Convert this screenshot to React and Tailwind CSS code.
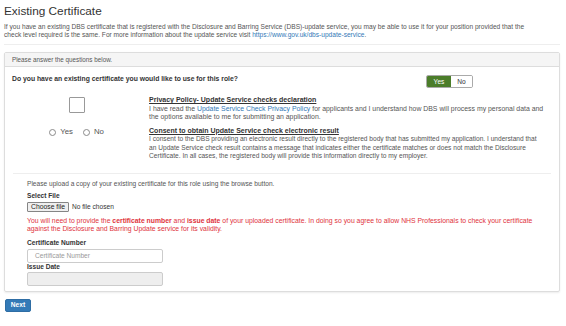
import React from "react";

const Radio = ({ label }) => (
  <label className="flex items-center gap-[4px] h-[9px]">
    <span className="w-[7px] h-[7px] rounded-full border border-[#8a8a8a] bg-white"></span>
    <span className="text-[7.8px]">{label}</span>
  </label>
);

const App = () => {
  const heading = "text-[#333] font-bold";

  return (
    <div className="w-[566px] h-[326px] overflow-hidden bg-white font-['Liberation_Sans',Arial,sans-serif] text-[6.6px] leading-[8px] text-[#555]">
      <div className="px-[4px]">
        {/* Title */}
        <h1 className="mt-[4px] text-[11.8px] leading-[15px] text-[#333] font-normal">Existing Certificate</h1>
        <p className="mt-[4px] w-[556px] whitespace-nowrap">
          If you have an existing DBS certificate that is registered with the Disclosure and Barring Service (DBS)-update service, you may be able to use it for your position provided that the
          <br />
          check level required is the same. For more information about the update service visit{" "}
          <span className="text-[#337ab7]">https://www.gov.uk/dbs-update-service</span>.
        </p>
        <div className="mt-[5px] h-px bg-[#eee] w-[556px]"></div>

        {/* Panel */}
        <div className="mt-[7px] w-[556px] border border-[#ddd] rounded-[2px] shadow-[0_1px_2px_rgba(0,0,0,0.08)]">
          <div className="h-[14px] bg-[#f5f5f5] border-b border-[#ddd] px-[7px] flex items-center text-[6.3px] text-[#555]">
            Please answer the questions below.
          </div>

          <div className="px-[8px] pt-[8px] pb-[5px]">
            {/* Question */}
            <div className="flex items-start">
              <p className={`w-[414px] ${heading} text-[6.8px] -ml-[1px]`}>Do you have an existing certificate you would like to use for this role?</p>
              <div className="flex h-[13px] rounded-[2px] overflow-hidden border border-[#aaa]">
                <span className="w-[24px] bg-[#4b7d2a] text-white flex items-center justify-center">Yes</span>
                <span className="w-[21px] bg-white text-[#333] flex items-center justify-center">No</span>
              </div>
            </div>

            {/* Privacy declaration */}
            <div className="flex mt-[8px] leading-[8.5px]">
              <div className="w-[128px] flex justify-center items-start">
                <span className="mt-[1px] w-[16px] h-[16px] border border-[#999] rounded-[1px] bg-white"></span>
              </div>
              <div className="ml-[9px] w-[405px] whitespace-nowrap">
                <p className={`${heading} text-[7px] underline`}>Privacy Policy- Update Service checks declaration</p>
                <p className="text-[6.9px]">
                  I have read the <span className="text-[#337ab7]">Update Service Check Privacy Policy</span> for applicants and I understand how DBS will process my personal data and
                  <br />
                  the options available to me for submitting an application.
                </p>
              </div>
            </div>

            {/* Consent */}
            <div className="flex mt-[5px] leading-[8.5px]">
              <div className="w-[128px] flex justify-center items-start gap-[10px] pt-[1px]">
                <Radio label="Yes" />
                <Radio label="No" />
              </div>
              <div className="ml-[9px] w-[405px] whitespace-nowrap">
                <p className={`${heading} text-[7px] underline`}>Consent to obtain Update Service check electronic result</p>
                <p>
                  I consent to the DBS providing an electronic result directly to the registered body that has submitted my application. I understand that
                  <br />
                  an Update Service check result contains a message that indicates either the certificate matches or does not match the Disclosure
                  <br />
                  Certificate. In all cases, the registered body will provide this information directly to my employer.
                </p>
              </div>
            </div>

            <div className="mt-[12px] h-px bg-[#eee] w-[538px]"></div>

            {/* Upload */}
            <div className="px-[14px]">
              <p className="mt-[6px]">Please upload a copy of your existing certificate for this role using the browse button.</p>
              <p className={`mt-[4px] ${heading}`}>Select File</p>
              <div className="mt-[2px] flex items-center gap-[3px] h-[10px]">
                <span className="h-[10px] px-[3px] flex items-center bg-[#efefef] border border-[#858585] rounded-[1px] text-[#222] text-[6.8px]">Choose file</span>
                <span className="text-[#333]">No file chosen</span>
              </div>
              <p className="mt-[5px] leading-[8.5px] text-[6.85px] text-[#e0323c] whitespace-nowrap">
                You will need to provide the <b>certificate number</b> and <b>issue date</b> of your uploaded certificate. In doing so you agree to allow NHS Professionals to check your certificate
                <br />
                against the Disclosure and Barring Update service for its validity.
              </p>
              <p className={`mt-[5px] ${heading}`}>Certificate Number</p>
              <div className="mt-[2px] w-[136px] h-[14px] border border-[#ccc] rounded-[2px] bg-white flex items-center px-[7px] text-[#999]">
                Certificate Number
              </div>
              <p className={heading}>Issue Date</p>
              <div className="mt-[1px] w-[136px] h-[14px] border border-[#ccc] rounded-[2px] bg-[#eee]"></div>
            </div>
          </div>
        </div>

        {/* Next */}
        <button className="mt-[7px] ml-[1px] w-[26px] h-[13px] rounded-[2px] bg-[#337ab7] border border-[#2e6da4] text-white font-bold text-[6.6px] flex items-center justify-center">
          Next
        </button>
      </div>
    </div>
  );
};

export default App;
